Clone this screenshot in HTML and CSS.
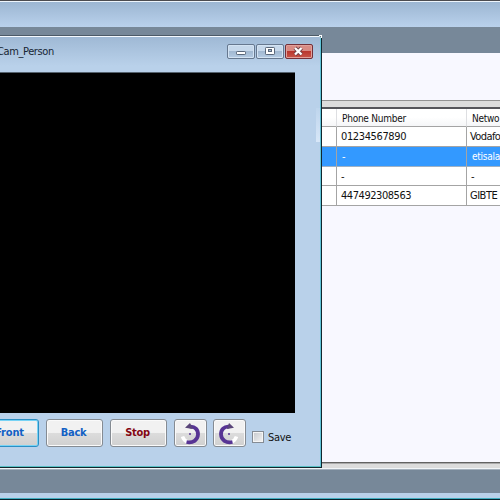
FILE: index.html
```
<!DOCTYPE html>
<html lang="en">
<head>
<meta charset="utf-8">
<title>Cam_Person</title>
<link rel="stylesheet" href="styles.css">
</head>
<body>
<main class="desktop">
  <header class="titlebar"></header>
  <div class="band band-top"></div>
  <section class="content">
    <div class="blank"></div>
    <div class="splitter"></div>
    <div class="grid">
      <div class="row head"><span></span><span><b class="phone-head">Phone Number</b></span><span><b class="net-head">Netwo</b></span></div>
      <div class="row"><span></span><span><b class="num1">01234567890</b></span><span><b class="net">Vodafo</b></span></div>
      <div class="row selected"><span></span><span><b>-</b></span><span><b class="eti">etisala</b></span></div>
      <div class="row short"><span></span><span><b>-</b></span><span><b>-</b></span></div>
      <div class="row"><span></span><span><b class="num2">447492308563</b></span><span><b class="gib">GIBTE</b></span></div>
    </div>
  </section>
  <div class="status"></div>
  <div class="band band-bottom"></div>
  <footer class="frame-bottom"></footer>

  <section class="window">
    <div class="glint"></div>
    <div class="corner"></div>
    <header class="caption">
      <h1>Cam_Person</h1>
      <div class="controls">
        <button class="ctl" aria-label="Minimize"><svg width="26" height="13" viewBox="0 0 26 13"><rect x="8.5" y="6.5" width="9" height="3" rx=".7" fill="#fff" stroke="#59677a"/></svg></button>
        <button class="ctl" aria-label="Maximize"><svg width="26" height="13" viewBox="0 0 26 13"><rect x="8.5" y="2.5" width="9" height="7" rx=".7" fill="#fff" stroke="#59677a"/><rect x="11.5" y="4.5" width="3" height="2" fill="#a8bdd5" stroke="#59677a"/></svg></button>
        <button class="ctl close" aria-label="Close"><svg width="25" height="13" viewBox="0 0 25 13"><path d="M9 3L15.5 9.5M15.5 3L9 9.5" stroke="#704248" stroke-width="4"/><path d="M9 3L15.5 9.5M15.5 3L9 9.5" stroke="#fff" stroke-width="2.3"/></svg></button>
      </div>
    </header>
    <div class="video"></div>
    <div class="toolbar">
      <button class="btn front"><b>Front</b></button>
      <button class="btn back"><b>Back</b></button>
      <button class="btn stop"><b>Stop</b></button>
      <button class="btn icon" aria-label="Rotate left"><svg width="31" height="25" viewBox="0 0 31 25"><path d="M7.5 15.5A8 8 0 0 0 13 21" fill="none" stroke="#fff" stroke-width="3.5"/><path d="M14.5 5.7C20 5 23.2 9 23 13.5C22.7 19 18 22.3 11.5 21" fill="none" stroke="#573494" stroke-width="3.8"/><path d="M10 6.8L15 2L18 8Z" fill="#594579"/><circle cx="15" cy="13" r="1" fill="#573494"/></svg></button>
      <button class="btn icon" aria-label="Rotate right"><svg width="31" height="25" viewBox="0 0 31 25"><path d="M22.5 15.5A8 8 0 0 1 17 21" fill="none" stroke="#fff" stroke-width="3.5"/><path d="M15.5 5.7C10 5 6.8 9 7 13.5C7.3 19 12 22.3 18.5 21" fill="none" stroke="#573494" stroke-width="3.8"/><path d="M20 6.8L15 2L13 8Z" fill="#594579"/><circle cx="15" cy="13" r="1" fill="#573494"/></svg></button>
      <label class="save"><i></i><span>Save</span></label>
    </div>
  </section>
</main>
</body>
</html>
```
FILE: styles.css
```
* { box-sizing: border-box; }
body { margin: 0; }
.desktop {
  position: relative;
  width: 500px;
  height: 500px;
  overflow: hidden;
  display: flex;
  flex-direction: column;
  background: #778899;
  font: 11px/14px "DejaVu Sans Condensed", "DejaVu Sans", sans-serif;
  color: #111;
}
.desktop > * { flex: none; }
.titlebar {
  height: 27px;
  border-top: 1px solid #4c4c50;
  box-shadow: inset 0 1px #eef5fc;
  background: linear-gradient(#9bb5d1, #b9d1ec);
}
.band { background: #778899; }
.band-top { height: 26px; }
.content { height: 409px; background: #f8f8ff; display: flex; flex-direction: column; }
.blank { height: 47px; }
.splitter {
  height: 7px;
  border-top: 1px solid #929292;
  background: #dcdcdc;
}
.grid { border-top: 2px solid #55555a; }
.row {
  display: grid;
  grid-template-columns: 337px 130px 1fr;
  height: 20px;
  background: #fff;
}
.row span {
  border-right: 1px solid #a4a4a4;
  border-bottom: 1px solid #a4a4a4;
  padding: 3px 0 0 4px;
  white-space: nowrap;
}
.row span:last-child { border-right: 0; }
.row b { font-weight: 400; display: inline-block; }
.row.short { height: 19px; }
.row.head { height: 18px; background: linear-gradient(#fff 45%, #f4f5f7); font-size: 10px; }
.row.head span { padding: 3px 0 0 5px; border-right-color: #dedfe2; }
.phone-head { letter-spacing: -.25px; }
.net-head { letter-spacing: -.3px; }
.num1 { letter-spacing: -.38px; }
.num2 { letter-spacing: -.45px; }
.net, .gib { margin-left: -1px; letter-spacing: -.5px; }
.net { letter-spacing: -.6px; }
.selected { background: #3399ff; color: #fff; }
.selected span { border-bottom-color: #9fb1c4; padding-left: 5px; }
.eti { font-size: 10px; letter-spacing: -.25px; }
.status {
  height: 8px;
  background: linear-gradient(#626262 0 1px, #a9a9a9 1px 2px, #dcdcdc 2px 6px, #f1f5f8 6px 7px, #a4b0bc 7px);
}
.band-bottom { height: 23px; }
.frame-bottom {
  height: 7px;
  background: linear-gradient(#b9d1ea 0 5px, #41adc0 5px 6px, #06232e 6px);
}
.window {
  position: absolute;
  left: -20px;
  top: 35px;
  width: 342px;
  height: 433px;
  border: 1px solid #11272e;
  border-top-color: #4d5b68;
  border-radius: 0 3px 0 0;
  background: linear-gradient(#9eb8d4 0, #b9d1ea 30px);
  box-shadow: inset 0 1px #f4f9fe, inset 0 -1px #58c0c5, inset -1px 0 #5fc3d8, 0 1px #f2f5f7;
}
.glint { position: absolute; right: 1px; top: 72px; width: 4px; height: 34px; background: linear-gradient(#bed5ed, #d8e7f8); }
.corner { position: absolute; right: -1px; top: -1px; width: 3px; height: 3px; border-top: 1px solid #fff; border-right: 1px solid #fff; }
.caption { height: 36px; display: flex; padding-left: 16px; }
h1 { margin: 9px 0 0; font: 11px/14px "DejaVu Sans Condensed", sans-serif; color: #172533; width: 191px; letter-spacing: -.4px; }
.controls { display: flex; gap: 1px; margin: 8px 0 0 39px; }
.ctl {
  width: 28px;
  height: 15px;
  padding: 0;
  border: 1px solid #66788f;
  border-radius: 2px;
  background: linear-gradient(#c6d8eb 48%, #a2b9d2 50%, #b4cbe3);
  box-shadow: inset 0 0 0 1px #d3e3f3;
}
.ctl svg, .btn svg { display: block; }
.close { border-color: #743039; background: linear-gradient(#d98b84 45%, #b9362e 48%, #c8564a); box-shadow: inset 0 0 0 1px #e1a09a; }
.video { width: 314px; height: 341px; border-top: 1px solid #56636f; background: #000; margin-bottom: 6px; }
.toolbar { display: flex; padding-left: 7px; }
.btn {
  width: 57px;
  height: 28px;
  padding: 0;
  border: 1px solid #858b92;
  border-radius: 3px;
  box-shadow: inset 0 0 0 1px #fafafa;
  background: linear-gradient(#f1f1f1 48%, #dcdcdc 50%, #d0d0d0);
  font: 11px/14px "DejaVu Sans Condensed", sans-serif;
  color: #1260c4;
}
.front { width: 51px; border-color: #2b8fc4; box-shadow: inset 0 0 0 1px #77d3f5; }
.front b { margin-right: 8px; letter-spacing: -.2px; }
.back { margin-left: 7px; }
.stop { margin-left: 7px; color: #840713; }
.stop b { margin-right: 2px; letter-spacing: -.3px; }
.back b { margin-right: 2px; letter-spacing: -.3px; }
.icon { width: 33px; margin-left: 7px; }
.icon + .icon { margin-left: 6px; }
.save { display: flex; margin: 12px 0 0 6px; height: 14px; letter-spacing: -.35px; }
.save i { width: 12px; height: 12px; border: 1px solid #858c94; background: linear-gradient(135deg, #c5c8cc, #f4f4f4); box-shadow: inset 0 0 0 1px #f5f5f5; margin-right: 4px; }
```
